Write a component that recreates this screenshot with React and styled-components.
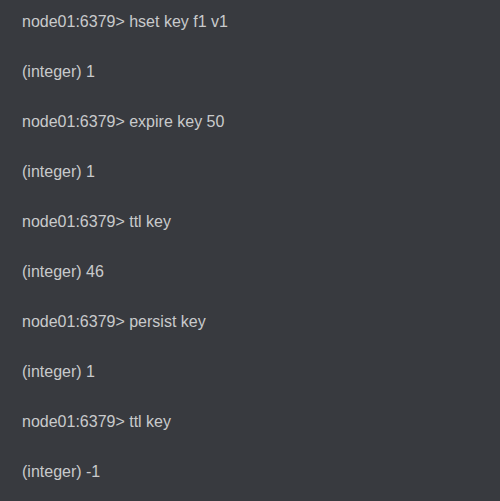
import React from 'react'
import styled, { createGlobalStyle } from 'styled-components'

const GlobalStyle = createGlobalStyle`
	html, body {
		margin: 0;
		padding: 0;
		background: #383a3f;
	}
`

const Terminal = styled.div`
	width: 500px;
	height: 501px;
	box-sizing: border-box;
	padding: 0 22px;
	background: #383a3f;
	color: #c9cacc;
	font-family: "Liberation Sans", Arial, sans-serif;
	font-size: 16px;
	overflow: hidden;
`

const Line = styled.div`
	height: 50px;
	line-height: 44px;
	white-space: pre;
`

const lines = [
	'node01:6379> hset key f1 v1',
	'(integer) 1',
	'node01:6379> expire key 50',
	'(integer) 1',
	'node01:6379> ttl key',
	'(integer) 46',
	'node01:6379> persist key',
	'(integer) 1',
	'node01:6379> ttl key',
	'(integer) -1',
]

export default function App() {
	return (
		<>
			<GlobalStyle />
			<Terminal>
				{lines.map((text, i) => (
					<Line key={i}>{text}</Line>
				))}
			</Terminal>
		</>
	)
}
